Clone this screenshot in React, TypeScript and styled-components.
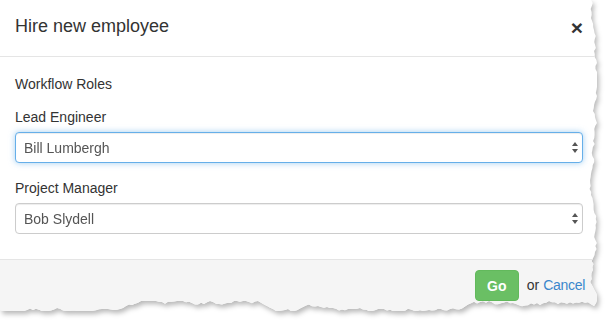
import React from 'react'
import styled, { createGlobalStyle } from 'styled-components'

const GlobalStyle = createGlobalStyle`
    html, body {
        margin: 0;
        padding: 0;
        background: #ffffff;
    }
    * {
        box-sizing: border-box;
    }
`

// torn paper edge, built once from a seeded random walk
const tornEdge = () => {
    let seed = 7
    const rand = () => {
        seed = (seed * 16807) % 2147483647
        return (seed - 1) / 2147483646
    }
    const pts: string[] = ['0px 0px']
    let x = 593
    for (let y = 0; y <= 306; y += 3) {
        x += (rand() - 0.5) * 4
        x = Math.max(588, Math.min(597, x))
        pts.push(`${x.toFixed(1)}px ${y}px`)
    }
    let y = 307
    for (let px = Math.floor(x); px >= 0; px -= 3) {
        y += (rand() - 0.5) * 4
        y = Math.max(301, Math.min(311, y))
        pts.push(`${px}px ${y.toFixed(1)}px`)
    }
    pts.push(`0px ${y.toFixed(1)}px`)
    return `polygon(${pts.join(', ')})`
}

const Page = styled.div`
    width: 608px;
    height: 323px;
    overflow: hidden;
    background: #ffffff;
    font-family: "Liberation Sans", Arial, sans-serif;
    color: #333333;
`

const Shadow = styled.div`
    filter: drop-shadow(2px 3px 2.5px rgba(0, 0, 0, 0.28));
`

const Modal = styled.div`
    width: 598px;
    height: 314px;
    background: #ffffff;
    display: flex;
    flex-direction: column;
    clip-path: ${tornEdge()};
`

const Header = styled.div`
    height: 57px;
    padding: 14px 15px 0 15px;
    border-bottom: 1px solid #e5e5e5;
    display: flex;
    justify-content: space-between;
    align-items: flex-start;
    h4 {
        margin: 0;
        font-size: 18px;
        font-weight: 400;
        line-height: 25px;
        color: #333333;
    }
`

const Close = styled.button`
    border: 0;
    background: none;
    padding: 0;
    margin-top: 3px;
    font-family: "Liberation Sans", Arial, sans-serif;
    font-size: 21px;
    font-weight: 700;
    line-height: 21px;
    color: #333333;
    cursor: pointer;
`

const Body = styled.div`
    padding: 17px 15px 25px 15px;
    font-size: 14px;
    line-height: 20px;
    .intro {
        margin: 0 0 13px 0;
    }
`

const FormGroup = styled.div`
    & + & {
        margin-top: 15px;
    }
    label {
        display: block;
        margin-bottom: 5px;
        font-weight: 400;
    }
`

const SelectWrap = styled.div`
    position: relative;
`

const Select = styled.select<{ $focused?: boolean }>`
    display: block;
    width: 100%;
    height: 31px;
    padding: 0 24px 0 8px;
    appearance: none;
    -webkit-appearance: none;
    background: #ffffff;
    border: 1px solid ${(p) => (p.$focused ? '#66afe9' : '#cccccc')};
    border-radius: 4px;
    font-family: "Liberation Sans", Arial, sans-serif;
    font-size: 14px;
    color: #555555;
    outline: none;
    box-shadow: ${(p) =>
        p.$focused
            ? 'inset 0 1px 1px rgba(0,0,0,.075), 0 0 6px rgba(102,175,233,.6)'
            : 'inset 0 1px 1px rgba(0,0,0,.075)'};
`

const Arrows = styled.svg`
    position: absolute;
    right: 5px;
    top: 10px;
    pointer-events: none;
`

const Footer = styled.div`
    flex: 1;
    background: #f5f5f5;
    border-top: 1px solid #e5e5e5;
    padding: 10px 13px 10px 15px;
    display: flex;
    justify-content: flex-end;
    align-items: flex-start;
    font-size: 14px;
    .or {
        margin-left: 8px;
        line-height: 31px;
    }
    a {
        color: #3a87cc;
        text-decoration: none;
        margin-left: 4px;
        line-height: 31px;
        letter-spacing: -0.3px;
    }
`

const GoButton = styled.button`
    width: 44px;
    height: 31px;
    padding: 0;
    border: 1px solid #62b95c;
    border-radius: 4px;
    background: #6abf64;
    color: #ffffff;
    font-family: "Liberation Sans", Arial, sans-serif;
    font-size: 14px;
    font-weight: 700;
    cursor: pointer;
`

const RoleSelect = ({ value, focused }: { value: string; focused?: boolean }) => (
    <SelectWrap>
        <Select $focused={focused} defaultValue={value}>
            <option>{value}</option>
        </Select>
        <Arrows width="6" height="11" viewBox="0 0 6 11">
            <path d="M3 0 L6 4 L0 4 Z" fill="#555555" />
            <path d="M0 7 L6 7 L3 11 Z" fill="#555555" />
        </Arrows>
    </SelectWrap>
)

const App = () => {
    const roles = [
        { id: 1, label: 'Lead Engineer', value: 'Bill Lumbergh', focused: true },
        { id: 2, label: 'Project Manager', value: 'Bob Slydell', focused: false },
    ]
    return (
        <Page>
            <GlobalStyle />
            <Shadow>
                <Modal>
                    <Header>
                        <h4>Hire new employee</h4>
                        <Close aria-label="Close">×</Close>
                    </Header>
                    <Body>
                        <p className="intro">Workflow Roles</p>
                        {roles.map((role) => (
                            <FormGroup key={role.id}>
                                <label>{role.label}</label>
                                <RoleSelect value={role.value} focused={role.focused} />
                            </FormGroup>
                        ))}
                    </Body>
                    <Footer>
                        <GoButton>Go</GoButton>
                        <span className="or">or</span>
                        <a href="#">Cancel</a>
                    </Footer>
                </Modal>
            </Shadow>
        </Page>
    )
}

export default App
